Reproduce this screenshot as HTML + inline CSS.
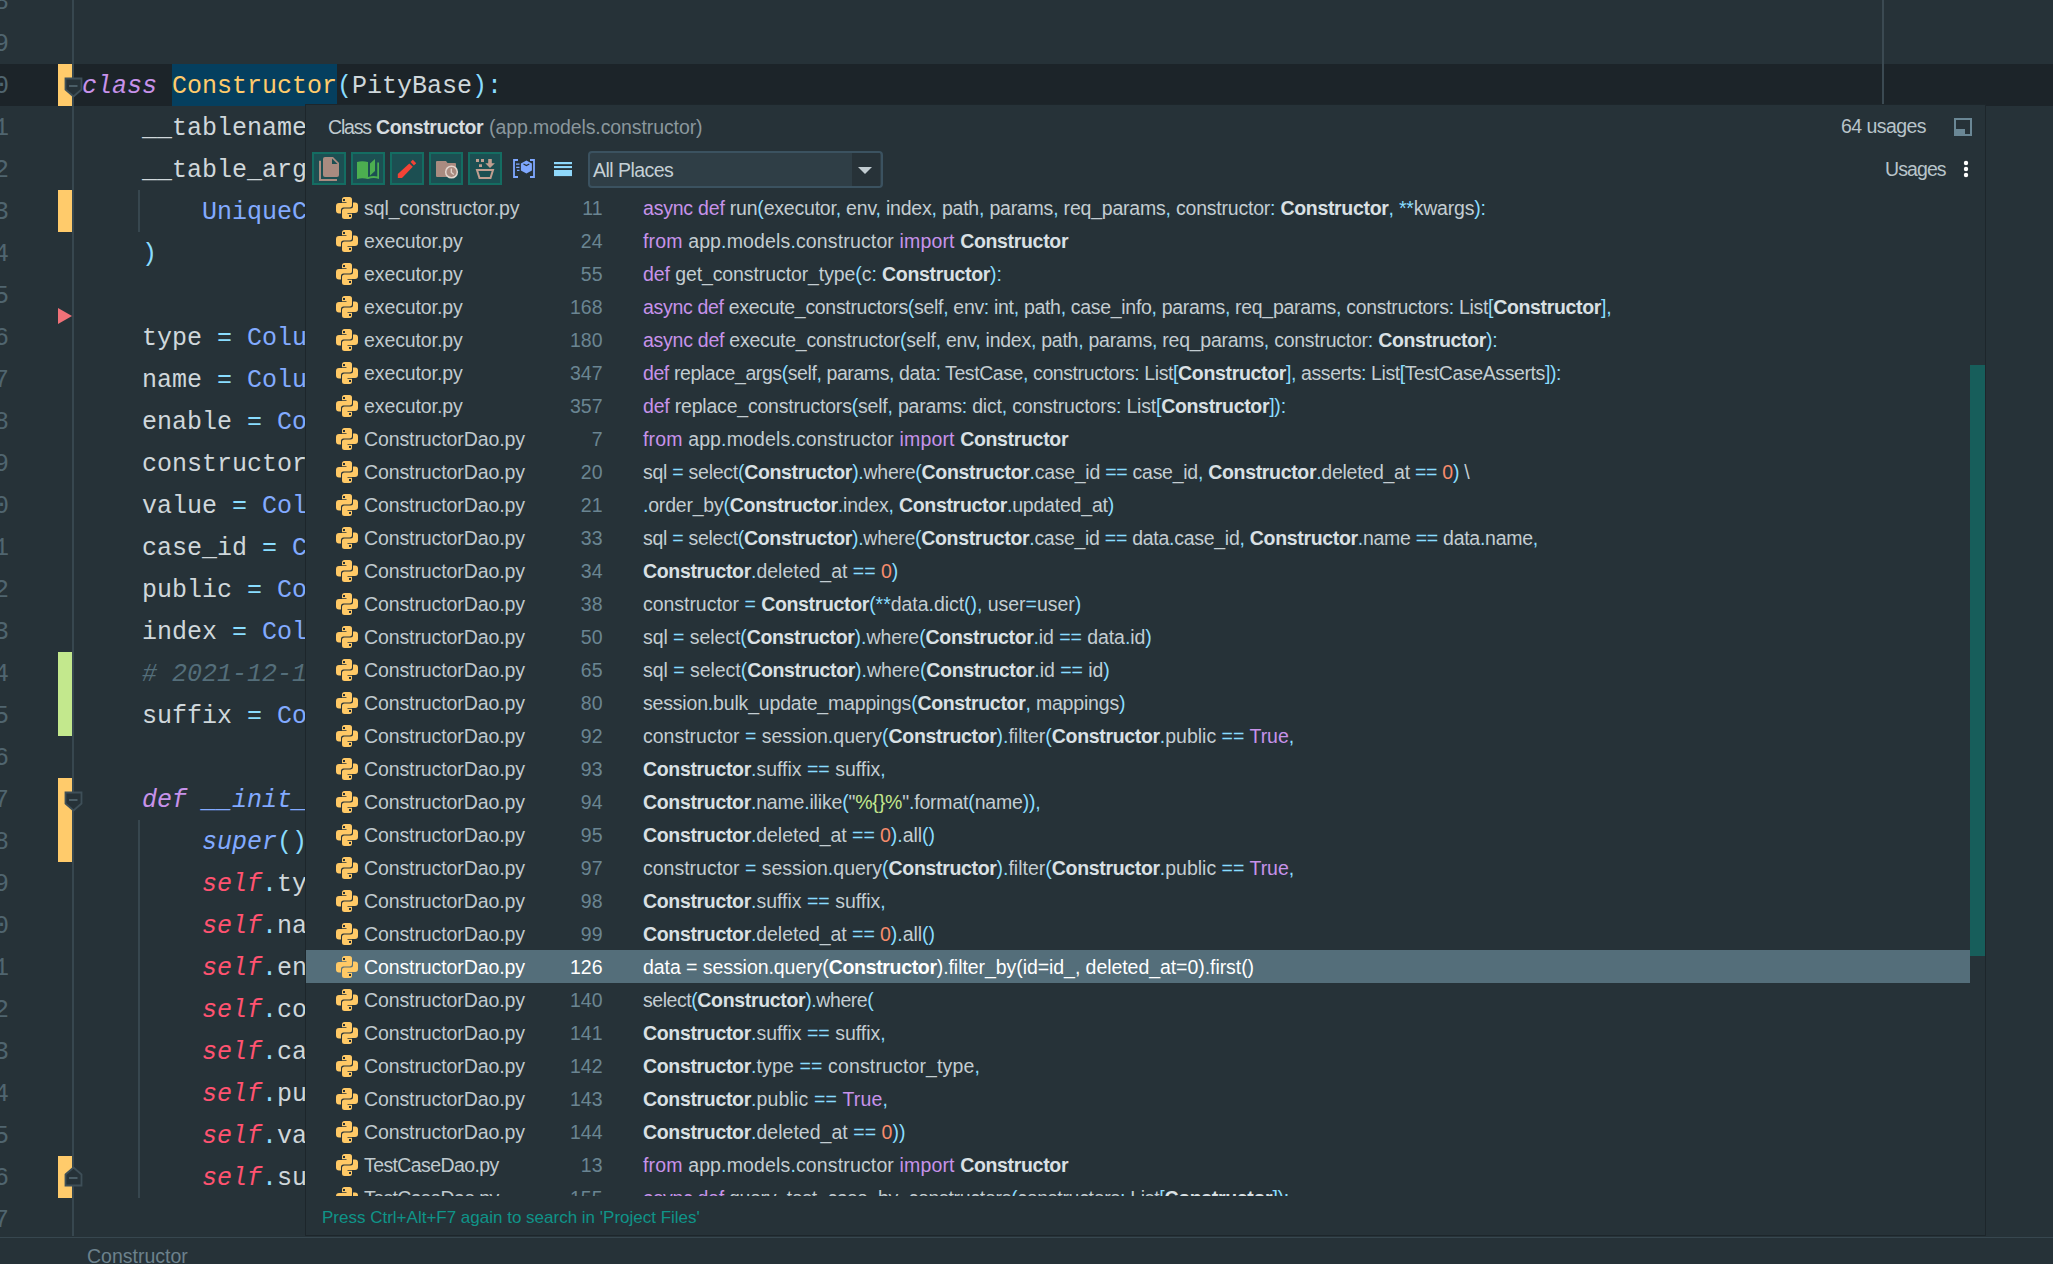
<!DOCTYPE html>
<html><head><meta charset="utf-8">
<style>
*{margin:0;padding:0;box-sizing:border-box}
html,body{width:2053px;height:1264px;overflow:hidden;background:#263238}
body{position:relative;font-family:"Liberation Sans",sans-serif}
.abs{position:absolute}
/* editor */
#ed{position:absolute;left:0;top:0;width:2053px;height:1237px;overflow:hidden}
.ln{position:absolute;left:-40px;width:49px;text-align:right;font:25px/42px "Liberation Mono",monospace;color:#50656f;padding-top:2px}
.cl{position:absolute;left:82px;height:42px;white-space:pre;font:25px/42px "Liberation Mono",monospace;color:#cfd7db;padding-top:2px}
.cur{position:absolute;left:0;top:64px;width:2053px;height:42px;background:#1c2429}
.mk{position:absolute;left:58px;width:14px}
.y{background:#ffcb6b}.g{background:#c3e88d}
.gut{position:absolute;left:72px;top:0;width:2px;height:1236px;background:#37474f}
.guide{position:absolute;width:1px;background:#37474f}
.kw{color:#c792ea;font-style:italic}
.p{color:#89ddff}
.fn{color:#82aaff}
.fni{color:#82aaff;font-style:italic}
.cls{color:#ffcb6b}
.slf{color:#ff5370;font-style:italic}
.cm{color:#546e7a;font-style:italic}
/* popup */
#pop{position:absolute;left:305px;top:104px;width:1681px;height:1132px;background:#263238;border:1px solid #1d262b}
.t19{font-size:19.5px;white-space:pre}
.row{position:absolute;left:0;width:1664px;height:33px;line-height:33px;white-space:pre;font-size:19.5px}
.row .f{position:absolute;left:58px;top:1px;color:#c0cacf;letter-spacing:0px}
.row .n{position:absolute;left:248.5px;top:1px;width:48px;text-align:right;color:#6a8592}
.row .c{position:absolute;left:337px;top:1px;color:#c3cdd2}
.row .ic{position:absolute;left:30px;top:6px;width:22px;height:22px}
.row.sel{background:#546e7a}
.row.sel .f,.row.sel .n,.row.sel .c,.row.sel .c *{color:#fff}
.k{color:#c792ea}
.o{color:#89ddff}
.b{font-weight:bold;color:#d9e0e4;letter-spacing:-0.33px}
.num{color:#f78c6c}
.str{color:#c3e88d}
.btn{position:absolute;top:46px;width:34px;height:33px;background:#1c4f52;border:2px solid #146d62}
</style></head><body>
<div id="ed">
  <div class="cur"></div>
  <div class="abs" style="left:172px;top:64px;width:165px;height:42px;background:#053f5f"></div>
  <div class="gut"></div>
  <!-- line numbers -->
  <div class="ln" style="top:-20px">38</div>
  <div class="ln" style="top:22px">39</div>
  <div class="ln" style="top:64px">40</div>
  <div class="ln" style="top:106px">41</div>
  <div class="ln" style="top:148px">42</div>
  <div class="ln" style="top:190px">43</div>
  <div class="ln" style="top:232px">44</div>
  <div class="ln" style="top:274px">45</div>
  <div class="ln" style="top:316px">46</div>
  <div class="ln" style="top:358px">47</div>
  <div class="ln" style="top:400px">48</div>
  <div class="ln" style="top:442px">49</div>
  <div class="ln" style="top:484px">50</div>
  <div class="ln" style="top:526px">51</div>
  <div class="ln" style="top:568px">52</div>
  <div class="ln" style="top:610px">53</div>
  <div class="ln" style="top:652px">54</div>
  <div class="ln" style="top:694px">55</div>
  <div class="ln" style="top:736px">56</div>
  <div class="ln" style="top:778px">57</div>
  <div class="ln" style="top:820px">58</div>
  <div class="ln" style="top:862px">59</div>
  <div class="ln" style="top:904px">60</div>
  <div class="ln" style="top:946px">61</div>
  <div class="ln" style="top:988px">62</div>
  <div class="ln" style="top:1030px">63</div>
  <div class="ln" style="top:1072px">64</div>
  <div class="ln" style="top:1114px">65</div>
  <div class="ln" style="top:1156px">66</div>
  <div class="ln" style="top:1198px">67</div>
  <!-- markers -->
  <div class="mk y" style="top:64px;height:42px"></div>
  <div class="mk y" style="top:190px;height:42px"></div>
  <div class="mk g" style="top:652px;height:84px"></div>
  <div class="mk y" style="top:778px;height:84px"></div>
  <div class="mk y" style="top:1156px;height:42px"></div>
  <svg class="abs" style="left:57px;top:307px" width="16" height="18"><path d="M1 1 L15 9 L1 17 Z" fill="#f07178"/></svg>
  <!-- fold icons -->
  <svg class="abs" style="left:64px;top:77px" width="19" height="21"><path d="M1.5 1.5 H17.5 V12.5 L9.5 19.5 L1.5 12.5 Z" fill="#263238" stroke="#3e4f58" stroke-width="1.8"/><path d="M5 9 H13.5" stroke="#4f636c" stroke-width="1.8"/></svg>
  <svg class="abs" style="left:64px;top:791px" width="19" height="21"><path d="M1.5 1.5 H17.5 V12.5 L9.5 19.5 L1.5 12.5 Z" fill="#263238" stroke="#3e4f58" stroke-width="1.8"/><path d="M5 9 H13.5" stroke="#4f636c" stroke-width="1.8"/></svg>
  <svg class="abs" style="left:64px;top:1166px" width="19" height="21"><path d="M1.5 19.5 H17.5 V8.5 L9.5 1.5 L1.5 8.5 Z" fill="#263238" stroke="#3e4f58" stroke-width="1.8"/><path d="M5 12 H13.5" stroke="#4f636c" stroke-width="1.8"/></svg>
  <!-- indent guides -->
  <div class="guide" style="left:138px;top:190px;height:42px;width:2px"></div>
  <div class="guide" style="left:138px;top:820px;height:378px;width:2px"></div>
  <!-- right margin -->
  <div class="guide" style="left:1882px;top:0;height:1236px;width:2px;background:#3b4a52"></div>
  <!-- code -->
  <div class="cl" style="top:64px"><span class="kw">class</span> <span class="cls">Constructor</span><span class="p">(</span>PityBase<span class="p">):</span></div>
  <div class="cl" style="top:106px">    __tablename__ <span class="p">=</span> "pity_constructor"</div>
  <div class="cl" style="top:148px">    __table_args__ <span class="p">=</span> <span class="p">(</span></div>
  <div class="cl" style="top:190px">        <span class="fn">UniqueConstraint</span><span class="p">(</span></div>
  <div class="cl" style="top:232px">    <span class="p">)</span></div>
  <div class="cl" style="top:316px">    type <span class="p">=</span> <span class="fn">Column</span><span class="p">(</span>INT</div>
  <div class="cl" style="top:358px">    name <span class="p">=</span> <span class="fn">Column</span><span class="p">(</span>String</div>
  <div class="cl" style="top:400px">    enable <span class="p">=</span> <span class="fn">Column</span><span class="p">(</span>Boolean</div>
  <div class="cl" style="top:442px">    constructor_json <span class="p">=</span> <span class="fn">Column</span></div>
  <div class="cl" style="top:484px">    value <span class="p">=</span> <span class="fn">Column</span><span class="p">(</span>String</div>
  <div class="cl" style="top:526px">    case_id <span class="p">=</span> <span class="fn">Column</span><span class="p">(</span>INT</div>
  <div class="cl" style="top:568px">    public <span class="p">=</span> <span class="fn">Column</span><span class="p">(</span>Boolean</div>
  <div class="cl" style="top:610px">    index <span class="p">=</span> <span class="fn">Column</span><span class="p">(</span>INT</div>
  <div class="cl" style="top:652px">    <span class="cm"># 2021-12-18 </span></div>
  <div class="cl" style="top:694px">    suffix <span class="p">=</span> <span class="fn">Column</span><span class="p">(</span>Boolean</div>
  <div class="cl" style="top:778px">    <span class="kw">def</span> <span class="fni">__init__</span><span class="p">(</span></div>
  <div class="cl" style="top:820px">        <span class="fni">super</span><span class="p">()</span>.__init__</div>
  <div class="cl" style="top:862px">        <span class="slf">self</span><span class="p">.</span>type</div>
  <div class="cl" style="top:904px">        <span class="slf">self</span><span class="p">.</span>name</div>
  <div class="cl" style="top:946px">        <span class="slf">self</span><span class="p">.</span>enable</div>
  <div class="cl" style="top:988px">        <span class="slf">self</span><span class="p">.</span>constructor</div>
  <div class="cl" style="top:1030px">        <span class="slf">self</span><span class="p">.</span>case_id</div>
  <div class="cl" style="top:1072px">        <span class="slf">self</span><span class="p">.</span>public</div>
  <div class="cl" style="top:1114px">        <span class="slf">self</span><span class="p">.</span>value</div>
  <div class="cl" style="top:1156px">        <span class="slf">self</span><span class="p">.</span>suffix</div>
</div>
<!-- status -->
<div class="abs" style="left:0;top:1237px;width:2053px;height:1px;background:#37474f"></div>
<div class="abs t19" style="left:87px;top:1242px;color:#6c818c;font-size:19.5px;line-height:28px">Constructor</div>

<div id="pop"><div class="abs" style="left:0;top:1px">
<div class="abs t19" style="left:22px;top:9px;line-height:24px;color:#c0cbd0;letter-spacing:-1.2px">Class</div><div class="abs t19" style="left:70px;top:9px;line-height:24px;color:#d6dde0;font-weight:bold;letter-spacing:-0.4px">Constructor</div><div class="abs t19" style="left:183px;top:9px;line-height:24px;color:#8a979d;letter-spacing:-0.09px">(app.models.constructor)</div>
<div class="abs t19" style="left:1535px;top:8px;line-height:24px;color:#b8c4ca;letter-spacing:-0.55px">64 usages</div>
<svg class="abs" style="left:1648px;top:12px" width="18" height="18"><rect x="1" y="1" width="16" height="16" fill="none" stroke="#6a8795" stroke-width="2"/><rect x="1" y="11" width="10" height="6" fill="#6a8795"/></svg>
<div class="btn" style="left:6px"></div>
<div class="btn" style="left:45px"></div>
<div class="btn" style="left:84px"></div>
<div class="btn" style="left:123px"></div>
<div class="btn" style="left:162px"></div>
<svg class="abs" style="left:6px;top:46px" width="34" height="34"><path d="M8 8.8V28H25" fill="none" stroke="#a98b80" stroke-width="2"/><path d="M13 5H21L27 11V23Q27 25 25 25H13Q11 25 11 23V7Q11 5 13 5Z" fill="#a98b80"/><path d="M20 6.5V12H25.5Z" fill="#1b4f52"/></svg>
<svg class="abs" style="left:45px;top:46px" width="34" height="34"><path d="M6 10Q11 8.5 17 10V27Q11 25.5 6 27Z" fill="#4caf50"/><path d="M19 11.5L24 7V19L19 23.5Z" fill="#4caf50"/><path d="M26.3 10.5H28V27Q23 25 17 27V25Q22 23.5 26.3 24.5Z" fill="#4caf50"/></svg>
<svg class="abs" style="left:84px;top:46px" width="34" height="34"><path d="M7.8 21.9L19.3 11.4L22.8 14.7L12 26.1H7.8Z" fill="#f44336"/><path d="M20.6 10.1L22.8 7.8L26.2 11.2L23.9 13.5Z" fill="#f44336"/></svg>
<svg class="abs" style="left:123px;top:46px" width="34" height="34"><path d="M8 9H17L18.5 11H26Q27 11 27 12V24Q27 25 26 25H8Q7 25 7 24V10Q7 9 8 9Z" fill="#a98b80"/><circle cx="22.5" cy="20" r="5.8" fill="#a98b80" stroke="#e2d6ce" stroke-width="1.5"/><path d="M22.3 16.5V20.5L24.8 22.5" fill="none" stroke="#e2d6ce" stroke-width="1.3"/></svg>
<svg class="abs" style="left:162px;top:46px" width="34" height="34"><rect x="8" y="7" width="3" height="3" fill="#c09e90"/><rect x="13" y="7" width="3" height="3" fill="#c09e90"/><rect x="11" y="12.3" width="3" height="2.7" fill="#c09e90"/><path d="M20.2 7H23.8V11.2H26.9L22 16L17.3 11.2H20.2Z" fill="#c09e90"/><path d="M9 18H25L22.5 26H11.5Z" fill="none" stroke="#c09e90" stroke-width="2"/></svg>
<svg class="abs" style="left:207px;top:53px" width="23" height="19"><path d="M5 1H1V18H5" fill="none" stroke="#7fa8ff" stroke-width="1.8"/><path d="M17 1H21V18H17" fill="none" stroke="#7fa8ff" stroke-width="1.8"/><path d="M3 5.2H6.5M3.2 8.3H6.5M4 11.3H6.5" stroke="#7fa8ff" stroke-width="1.3"/><path d="M13.4 1.6L18.9 4.6V11.4L13.4 14.4L7.9 11.4V4.6Z" fill="#7fa8ff"/><path d="M10.5 5L13.4 6.6L16.3 5" fill="none" stroke="#263238" stroke-width="1.1"/></svg>
<svg class="abs" style="left:248px;top:56px" width="18" height="15"><rect x="0" y="0" width="18" height="2.2" fill="#8fd8fb"/><rect x="0" y="4" width="18" height="2.1" fill="#8fd8fb"/><rect x="0" y="8" width="18" height="6.1" fill="#8fd8fb"/></svg>
<div class="abs" style="left:282px;top:45px;width:295px;height:37px;border:2px solid #3b5260;border-radius:4px;background:#2f3e46"></div>
<div class="abs" style="left:546px;top:47px;width:28px;height:33px;background:#273238"></div>
<svg class="abs" style="left:551px;top:60px" width="16" height="9"><path d="M1 1H15L8 8Z" fill="#c2ccd1"/></svg>
<div class="abs t19" style="left:287px;top:52px;line-height:24px;color:#c5d0d5;letter-spacing:-0.53px">All Places</div>
<div class="abs t19" style="left:1579px;top:51px;line-height:24px;color:#b8c4ca;letter-spacing:-0.9px">Usages</div>
<svg class="abs" style="left:1656px;top:53px" width="8" height="20"><circle cx="4" cy="4" r="2.2" fill="#fff"/><circle cx="4" cy="10" r="2.2" fill="#fff"/><circle cx="4" cy="16" r="2.2" fill="#fff"/></svg>
<div class="abs" style="left:0;top:85px;width:1664px;height:1005px;overflow:hidden">
<div class="row" style="top:0px"><svg class="ic" viewBox="0 0 22 22"><g fill="#ffc966"><path id="sn" d="M8.5 0H13.5A2.5 2.5 0 0 1 16 2.5V8A2.5 2.5 0 0 1 13.5 10.5H7.5A2.5 2.5 0 0 0 5 13V16.5H3A3 3 0 0 1 0 13.5V9A3 3 0 0 1 3 6H10.5V5.2H6V2.5A2.5 2.5 0 0 1 8.5 0Z"/><path d="M8.5 0H13.5A2.5 2.5 0 0 1 16 2.5V8A2.5 2.5 0 0 1 13.5 10.5H7.5A2.5 2.5 0 0 0 5 13V16.5H3A3 3 0 0 1 0 13.5V9A3 3 0 0 1 3 6H10.5V5.2H6V2.5A2.5 2.5 0 0 1 8.5 0Z" transform="rotate(180 11 11)"/></g><rect x="7" y="2" width="2" height="2" fill="#263238"/><rect x="13" y="18" width="2" height="2" fill="#263238"/></svg><span class="f" style="letter-spacing:-0.1px">sql_constructor.py</span><span class="n">11</span><span class="c" style="letter-spacing:-0.212px"><span class="k">async</span> <span class="k">def</span> run<span class="o">(</span>executor<span class="o">,</span> env<span class="o">,</span> index<span class="o">,</span> path<span class="o">,</span> params<span class="o">,</span> req_params<span class="o">,</span> constructor<span class="o">:</span> <span class="b">Constructor</span><span class="o">,</span> <span class="o">**</span>kwargs<span class="o">):</span></span></div>
<div class="row" style="top:33px"><svg class="ic" viewBox="0 0 22 22"><g fill="#ffc966"><path id="sn" d="M8.5 0H13.5A2.5 2.5 0 0 1 16 2.5V8A2.5 2.5 0 0 1 13.5 10.5H7.5A2.5 2.5 0 0 0 5 13V16.5H3A3 3 0 0 1 0 13.5V9A3 3 0 0 1 3 6H10.5V5.2H6V2.5A2.5 2.5 0 0 1 8.5 0Z"/><path d="M8.5 0H13.5A2.5 2.5 0 0 1 16 2.5V8A2.5 2.5 0 0 1 13.5 10.5H7.5A2.5 2.5 0 0 0 5 13V16.5H3A3 3 0 0 1 0 13.5V9A3 3 0 0 1 3 6H10.5V5.2H6V2.5A2.5 2.5 0 0 1 8.5 0Z" transform="rotate(180 11 11)"/></g><rect x="7" y="2" width="2" height="2" fill="#263238"/><rect x="13" y="18" width="2" height="2" fill="#263238"/></svg><span class="f" style="letter-spacing:-0.1px">executor.py</span><span class="n">24</span><span class="c" style="letter-spacing:0.144px"><span class="k">from</span> app<span class="o">.</span>models<span class="o">.</span>constructor <span class="k">import</span> <span class="b">Constructor</span></span></div>
<div class="row" style="top:66px"><svg class="ic" viewBox="0 0 22 22"><g fill="#ffc966"><path id="sn" d="M8.5 0H13.5A2.5 2.5 0 0 1 16 2.5V8A2.5 2.5 0 0 1 13.5 10.5H7.5A2.5 2.5 0 0 0 5 13V16.5H3A3 3 0 0 1 0 13.5V9A3 3 0 0 1 3 6H10.5V5.2H6V2.5A2.5 2.5 0 0 1 8.5 0Z"/><path d="M8.5 0H13.5A2.5 2.5 0 0 1 16 2.5V8A2.5 2.5 0 0 1 13.5 10.5H7.5A2.5 2.5 0 0 0 5 13V16.5H3A3 3 0 0 1 0 13.5V9A3 3 0 0 1 3 6H10.5V5.2H6V2.5A2.5 2.5 0 0 1 8.5 0Z" transform="rotate(180 11 11)"/></g><rect x="7" y="2" width="2" height="2" fill="#263238"/><rect x="13" y="18" width="2" height="2" fill="#263238"/></svg><span class="f" style="letter-spacing:-0.1px">executor.py</span><span class="n">55</span><span class="c" style="letter-spacing:-0.097px"><span class="k">def</span> get_constructor_type<span class="o">(</span>c<span class="o">:</span> <span class="b">Constructor</span><span class="o">):</span></span></div>
<div class="row" style="top:99px"><svg class="ic" viewBox="0 0 22 22"><g fill="#ffc966"><path id="sn" d="M8.5 0H13.5A2.5 2.5 0 0 1 16 2.5V8A2.5 2.5 0 0 1 13.5 10.5H7.5A2.5 2.5 0 0 0 5 13V16.5H3A3 3 0 0 1 0 13.5V9A3 3 0 0 1 3 6H10.5V5.2H6V2.5A2.5 2.5 0 0 1 8.5 0Z"/><path d="M8.5 0H13.5A2.5 2.5 0 0 1 16 2.5V8A2.5 2.5 0 0 1 13.5 10.5H7.5A2.5 2.5 0 0 0 5 13V16.5H3A3 3 0 0 1 0 13.5V9A3 3 0 0 1 3 6H10.5V5.2H6V2.5A2.5 2.5 0 0 1 8.5 0Z" transform="rotate(180 11 11)"/></g><rect x="7" y="2" width="2" height="2" fill="#263238"/><rect x="13" y="18" width="2" height="2" fill="#263238"/></svg><span class="f" style="letter-spacing:-0.1px">executor.py</span><span class="n">168</span><span class="c" style="letter-spacing:-0.313px"><span class="k">async</span> <span class="k">def</span> execute_constructors<span class="o">(</span>self<span class="o">,</span> env<span class="o">:</span> int<span class="o">,</span> path<span class="o">,</span> case_info<span class="o">,</span> params<span class="o">,</span> req_params<span class="o">,</span> constructors<span class="o">:</span> List<span class="o">[</span><span class="b">Constructor</span><span class="o">],</span></span></div>
<div class="row" style="top:132px"><svg class="ic" viewBox="0 0 22 22"><g fill="#ffc966"><path id="sn" d="M8.5 0H13.5A2.5 2.5 0 0 1 16 2.5V8A2.5 2.5 0 0 1 13.5 10.5H7.5A2.5 2.5 0 0 0 5 13V16.5H3A3 3 0 0 1 0 13.5V9A3 3 0 0 1 3 6H10.5V5.2H6V2.5A2.5 2.5 0 0 1 8.5 0Z"/><path d="M8.5 0H13.5A2.5 2.5 0 0 1 16 2.5V8A2.5 2.5 0 0 1 13.5 10.5H7.5A2.5 2.5 0 0 0 5 13V16.5H3A3 3 0 0 1 0 13.5V9A3 3 0 0 1 3 6H10.5V5.2H6V2.5A2.5 2.5 0 0 1 8.5 0Z" transform="rotate(180 11 11)"/></g><rect x="7" y="2" width="2" height="2" fill="#263238"/><rect x="13" y="18" width="2" height="2" fill="#263238"/></svg><span class="f" style="letter-spacing:-0.1px">executor.py</span><span class="n">180</span><span class="c" style="letter-spacing:-0.256px"><span class="k">async</span> <span class="k">def</span> execute_constructor<span class="o">(</span>self<span class="o">,</span> env<span class="o">,</span> index<span class="o">,</span> path<span class="o">,</span> params<span class="o">,</span> req_params<span class="o">,</span> constructor<span class="o">:</span> <span class="b">Constructor</span><span class="o">):</span></span></div>
<div class="row" style="top:165px"><svg class="ic" viewBox="0 0 22 22"><g fill="#ffc966"><path id="sn" d="M8.5 0H13.5A2.5 2.5 0 0 1 16 2.5V8A2.5 2.5 0 0 1 13.5 10.5H7.5A2.5 2.5 0 0 0 5 13V16.5H3A3 3 0 0 1 0 13.5V9A3 3 0 0 1 3 6H10.5V5.2H6V2.5A2.5 2.5 0 0 1 8.5 0Z"/><path d="M8.5 0H13.5A2.5 2.5 0 0 1 16 2.5V8A2.5 2.5 0 0 1 13.5 10.5H7.5A2.5 2.5 0 0 0 5 13V16.5H3A3 3 0 0 1 0 13.5V9A3 3 0 0 1 3 6H10.5V5.2H6V2.5A2.5 2.5 0 0 1 8.5 0Z" transform="rotate(180 11 11)"/></g><rect x="7" y="2" width="2" height="2" fill="#263238"/><rect x="13" y="18" width="2" height="2" fill="#263238"/></svg><span class="f" style="letter-spacing:-0.1px">executor.py</span><span class="n">347</span><span class="c" style="letter-spacing:-0.412px"><span class="k">def</span> replace_args<span class="o">(</span>self<span class="o">,</span> params<span class="o">,</span> data<span class="o">:</span> TestCase<span class="o">,</span> constructors<span class="o">:</span> List<span class="o">[</span><span class="b">Constructor</span><span class="o">],</span> asserts<span class="o">:</span> List<span class="o">[</span>TestCaseAsserts<span class="o">]):</span></span></div>
<div class="row" style="top:198px"><svg class="ic" viewBox="0 0 22 22"><g fill="#ffc966"><path id="sn" d="M8.5 0H13.5A2.5 2.5 0 0 1 16 2.5V8A2.5 2.5 0 0 1 13.5 10.5H7.5A2.5 2.5 0 0 0 5 13V16.5H3A3 3 0 0 1 0 13.5V9A3 3 0 0 1 3 6H10.5V5.2H6V2.5A2.5 2.5 0 0 1 8.5 0Z"/><path d="M8.5 0H13.5A2.5 2.5 0 0 1 16 2.5V8A2.5 2.5 0 0 1 13.5 10.5H7.5A2.5 2.5 0 0 0 5 13V16.5H3A3 3 0 0 1 0 13.5V9A3 3 0 0 1 3 6H10.5V5.2H6V2.5A2.5 2.5 0 0 1 8.5 0Z" transform="rotate(180 11 11)"/></g><rect x="7" y="2" width="2" height="2" fill="#263238"/><rect x="13" y="18" width="2" height="2" fill="#263238"/></svg><span class="f" style="letter-spacing:-0.1px">executor.py</span><span class="n">357</span><span class="c" style="letter-spacing:-0.202px"><span class="k">def</span> replace_constructors<span class="o">(</span>self<span class="o">,</span> params<span class="o">:</span> dict<span class="o">,</span> constructors<span class="o">:</span> List<span class="o">[</span><span class="b">Constructor</span><span class="o">]):</span></span></div>
<div class="row" style="top:231px"><svg class="ic" viewBox="0 0 22 22"><g fill="#ffc966"><path id="sn" d="M8.5 0H13.5A2.5 2.5 0 0 1 16 2.5V8A2.5 2.5 0 0 1 13.5 10.5H7.5A2.5 2.5 0 0 0 5 13V16.5H3A3 3 0 0 1 0 13.5V9A3 3 0 0 1 3 6H10.5V5.2H6V2.5A2.5 2.5 0 0 1 8.5 0Z"/><path d="M8.5 0H13.5A2.5 2.5 0 0 1 16 2.5V8A2.5 2.5 0 0 1 13.5 10.5H7.5A2.5 2.5 0 0 0 5 13V16.5H3A3 3 0 0 1 0 13.5V9A3 3 0 0 1 3 6H10.5V5.2H6V2.5A2.5 2.5 0 0 1 8.5 0Z" transform="rotate(180 11 11)"/></g><rect x="7" y="2" width="2" height="2" fill="#263238"/><rect x="13" y="18" width="2" height="2" fill="#263238"/></svg><span class="f" style="letter-spacing:-0.1px">ConstructorDao.py</span><span class="n">7</span><span class="c" style="letter-spacing:0.144px"><span class="k">from</span> app<span class="o">.</span>models<span class="o">.</span>constructor <span class="k">import</span> <span class="b">Constructor</span></span></div>
<div class="row" style="top:264px"><svg class="ic" viewBox="0 0 22 22"><g fill="#ffc966"><path id="sn" d="M8.5 0H13.5A2.5 2.5 0 0 1 16 2.5V8A2.5 2.5 0 0 1 13.5 10.5H7.5A2.5 2.5 0 0 0 5 13V16.5H3A3 3 0 0 1 0 13.5V9A3 3 0 0 1 3 6H10.5V5.2H6V2.5A2.5 2.5 0 0 1 8.5 0Z"/><path d="M8.5 0H13.5A2.5 2.5 0 0 1 16 2.5V8A2.5 2.5 0 0 1 13.5 10.5H7.5A2.5 2.5 0 0 0 5 13V16.5H3A3 3 0 0 1 0 13.5V9A3 3 0 0 1 3 6H10.5V5.2H6V2.5A2.5 2.5 0 0 1 8.5 0Z" transform="rotate(180 11 11)"/></g><rect x="7" y="2" width="2" height="2" fill="#263238"/><rect x="13" y="18" width="2" height="2" fill="#263238"/></svg><span class="f" style="letter-spacing:-0.1px">ConstructorDao.py</span><span class="n">20</span><span class="c" style="letter-spacing:-0.265px">sql <span class="o">=</span> select<span class="o">(</span><span class="b">Constructor</span><span class="o">).</span>where<span class="o">(</span><span class="b">Constructor</span><span class="o">.</span>case_id <span class="o">==</span> case_id<span class="o">,</span> <span class="b">Constructor</span><span class="o">.</span>deleted_at <span class="o">==</span> <span class="num">0</span><span class="o">)</span> \</span></div>
<div class="row" style="top:297px"><svg class="ic" viewBox="0 0 22 22"><g fill="#ffc966"><path id="sn" d="M8.5 0H13.5A2.5 2.5 0 0 1 16 2.5V8A2.5 2.5 0 0 1 13.5 10.5H7.5A2.5 2.5 0 0 0 5 13V16.5H3A3 3 0 0 1 0 13.5V9A3 3 0 0 1 3 6H10.5V5.2H6V2.5A2.5 2.5 0 0 1 8.5 0Z"/><path d="M8.5 0H13.5A2.5 2.5 0 0 1 16 2.5V8A2.5 2.5 0 0 1 13.5 10.5H7.5A2.5 2.5 0 0 0 5 13V16.5H3A3 3 0 0 1 0 13.5V9A3 3 0 0 1 3 6H10.5V5.2H6V2.5A2.5 2.5 0 0 1 8.5 0Z" transform="rotate(180 11 11)"/></g><rect x="7" y="2" width="2" height="2" fill="#263238"/><rect x="13" y="18" width="2" height="2" fill="#263238"/></svg><span class="f" style="letter-spacing:-0.1px">ConstructorDao.py</span><span class="n">21</span><span class="c" style="letter-spacing:-0.207px"><span class="o">.</span>order_by<span class="o">(</span><span class="b">Constructor</span><span class="o">.</span>index<span class="o">,</span> <span class="b">Constructor</span><span class="o">.</span>updated_at<span class="o">)</span></span></div>
<div class="row" style="top:330px"><svg class="ic" viewBox="0 0 22 22"><g fill="#ffc966"><path id="sn" d="M8.5 0H13.5A2.5 2.5 0 0 1 16 2.5V8A2.5 2.5 0 0 1 13.5 10.5H7.5A2.5 2.5 0 0 0 5 13V16.5H3A3 3 0 0 1 0 13.5V9A3 3 0 0 1 3 6H10.5V5.2H6V2.5A2.5 2.5 0 0 1 8.5 0Z"/><path d="M8.5 0H13.5A2.5 2.5 0 0 1 16 2.5V8A2.5 2.5 0 0 1 13.5 10.5H7.5A2.5 2.5 0 0 0 5 13V16.5H3A3 3 0 0 1 0 13.5V9A3 3 0 0 1 3 6H10.5V5.2H6V2.5A2.5 2.5 0 0 1 8.5 0Z" transform="rotate(180 11 11)"/></g><rect x="7" y="2" width="2" height="2" fill="#263238"/><rect x="13" y="18" width="2" height="2" fill="#263238"/></svg><span class="f" style="letter-spacing:-0.1px">ConstructorDao.py</span><span class="n">33</span><span class="c" style="letter-spacing:-0.277px">sql <span class="o">=</span> select<span class="o">(</span><span class="b">Constructor</span><span class="o">).</span>where<span class="o">(</span><span class="b">Constructor</span><span class="o">.</span>case_id <span class="o">==</span> data<span class="o">.</span>case_id<span class="o">,</span> <span class="b">Constructor</span><span class="o">.</span>name <span class="o">==</span> data<span class="o">.</span>name<span class="o">,</span></span></div>
<div class="row" style="top:363px"><svg class="ic" viewBox="0 0 22 22"><g fill="#ffc966"><path id="sn" d="M8.5 0H13.5A2.5 2.5 0 0 1 16 2.5V8A2.5 2.5 0 0 1 13.5 10.5H7.5A2.5 2.5 0 0 0 5 13V16.5H3A3 3 0 0 1 0 13.5V9A3 3 0 0 1 3 6H10.5V5.2H6V2.5A2.5 2.5 0 0 1 8.5 0Z"/><path d="M8.5 0H13.5A2.5 2.5 0 0 1 16 2.5V8A2.5 2.5 0 0 1 13.5 10.5H7.5A2.5 2.5 0 0 0 5 13V16.5H3A3 3 0 0 1 0 13.5V9A3 3 0 0 1 3 6H10.5V5.2H6V2.5A2.5 2.5 0 0 1 8.5 0Z" transform="rotate(180 11 11)"/></g><rect x="7" y="2" width="2" height="2" fill="#263238"/><rect x="13" y="18" width="2" height="2" fill="#263238"/></svg><span class="f" style="letter-spacing:-0.1px">ConstructorDao.py</span><span class="n">34</span><span class="c" style="letter-spacing:-0.006px"><span class="b">Constructor</span><span class="o">.</span>deleted_at <span class="o">==</span> <span class="num">0</span><span class="o">)</span></span></div>
<div class="row" style="top:396px"><svg class="ic" viewBox="0 0 22 22"><g fill="#ffc966"><path id="sn" d="M8.5 0H13.5A2.5 2.5 0 0 1 16 2.5V8A2.5 2.5 0 0 1 13.5 10.5H7.5A2.5 2.5 0 0 0 5 13V16.5H3A3 3 0 0 1 0 13.5V9A3 3 0 0 1 3 6H10.5V5.2H6V2.5A2.5 2.5 0 0 1 8.5 0Z"/><path d="M8.5 0H13.5A2.5 2.5 0 0 1 16 2.5V8A2.5 2.5 0 0 1 13.5 10.5H7.5A2.5 2.5 0 0 0 5 13V16.5H3A3 3 0 0 1 0 13.5V9A3 3 0 0 1 3 6H10.5V5.2H6V2.5A2.5 2.5 0 0 1 8.5 0Z" transform="rotate(180 11 11)"/></g><rect x="7" y="2" width="2" height="2" fill="#263238"/><rect x="13" y="18" width="2" height="2" fill="#263238"/></svg><span class="f" style="letter-spacing:-0.1px">ConstructorDao.py</span><span class="n">38</span><span class="c" style="letter-spacing:-0.038px">constructor <span class="o">=</span> <span class="b">Constructor</span><span class="o">(**</span>data<span class="o">.</span>dict<span class="o">(),</span> user<span class="o">=</span>user<span class="o">)</span></span></div>
<div class="row" style="top:429px"><svg class="ic" viewBox="0 0 22 22"><g fill="#ffc966"><path id="sn" d="M8.5 0H13.5A2.5 2.5 0 0 1 16 2.5V8A2.5 2.5 0 0 1 13.5 10.5H7.5A2.5 2.5 0 0 0 5 13V16.5H3A3 3 0 0 1 0 13.5V9A3 3 0 0 1 3 6H10.5V5.2H6V2.5A2.5 2.5 0 0 1 8.5 0Z"/><path d="M8.5 0H13.5A2.5 2.5 0 0 1 16 2.5V8A2.5 2.5 0 0 1 13.5 10.5H7.5A2.5 2.5 0 0 0 5 13V16.5H3A3 3 0 0 1 0 13.5V9A3 3 0 0 1 3 6H10.5V5.2H6V2.5A2.5 2.5 0 0 1 8.5 0Z" transform="rotate(180 11 11)"/></g><rect x="7" y="2" width="2" height="2" fill="#263238"/><rect x="13" y="18" width="2" height="2" fill="#263238"/></svg><span class="f" style="letter-spacing:-0.1px">ConstructorDao.py</span><span class="n">50</span><span class="c" style="letter-spacing:-0.074px">sql <span class="o">=</span> select<span class="o">(</span><span class="b">Constructor</span><span class="o">).</span>where<span class="o">(</span><span class="b">Constructor</span><span class="o">.</span>id <span class="o">==</span> data<span class="o">.</span>id<span class="o">)</span></span></div>
<div class="row" style="top:462px"><svg class="ic" viewBox="0 0 22 22"><g fill="#ffc966"><path id="sn" d="M8.5 0H13.5A2.5 2.5 0 0 1 16 2.5V8A2.5 2.5 0 0 1 13.5 10.5H7.5A2.5 2.5 0 0 0 5 13V16.5H3A3 3 0 0 1 0 13.5V9A3 3 0 0 1 3 6H10.5V5.2H6V2.5A2.5 2.5 0 0 1 8.5 0Z"/><path d="M8.5 0H13.5A2.5 2.5 0 0 1 16 2.5V8A2.5 2.5 0 0 1 13.5 10.5H7.5A2.5 2.5 0 0 0 5 13V16.5H3A3 3 0 0 1 0 13.5V9A3 3 0 0 1 3 6H10.5V5.2H6V2.5A2.5 2.5 0 0 1 8.5 0Z" transform="rotate(180 11 11)"/></g><rect x="7" y="2" width="2" height="2" fill="#263238"/><rect x="13" y="18" width="2" height="2" fill="#263238"/></svg><span class="f" style="letter-spacing:-0.1px">ConstructorDao.py</span><span class="n">65</span><span class="c" style="letter-spacing:-0.037px">sql <span class="o">=</span> select<span class="o">(</span><span class="b">Constructor</span><span class="o">).</span>where<span class="o">(</span><span class="b">Constructor</span><span class="o">.</span>id <span class="o">==</span> id<span class="o">)</span></span></div>
<div class="row" style="top:495px"><svg class="ic" viewBox="0 0 22 22"><g fill="#ffc966"><path id="sn" d="M8.5 0H13.5A2.5 2.5 0 0 1 16 2.5V8A2.5 2.5 0 0 1 13.5 10.5H7.5A2.5 2.5 0 0 0 5 13V16.5H3A3 3 0 0 1 0 13.5V9A3 3 0 0 1 3 6H10.5V5.2H6V2.5A2.5 2.5 0 0 1 8.5 0Z"/><path d="M8.5 0H13.5A2.5 2.5 0 0 1 16 2.5V8A2.5 2.5 0 0 1 13.5 10.5H7.5A2.5 2.5 0 0 0 5 13V16.5H3A3 3 0 0 1 0 13.5V9A3 3 0 0 1 3 6H10.5V5.2H6V2.5A2.5 2.5 0 0 1 8.5 0Z" transform="rotate(180 11 11)"/></g><rect x="7" y="2" width="2" height="2" fill="#263238"/><rect x="13" y="18" width="2" height="2" fill="#263238"/></svg><span class="f" style="letter-spacing:-0.1px">ConstructorDao.py</span><span class="n">80</span><span class="c" style="letter-spacing:-0.182px">session<span class="o">.</span>bulk_update_mappings<span class="o">(</span><span class="b">Constructor</span><span class="o">,</span> mappings<span class="o">)</span></span></div>
<div class="row" style="top:528px"><svg class="ic" viewBox="0 0 22 22"><g fill="#ffc966"><path id="sn" d="M8.5 0H13.5A2.5 2.5 0 0 1 16 2.5V8A2.5 2.5 0 0 1 13.5 10.5H7.5A2.5 2.5 0 0 0 5 13V16.5H3A3 3 0 0 1 0 13.5V9A3 3 0 0 1 3 6H10.5V5.2H6V2.5A2.5 2.5 0 0 1 8.5 0Z"/><path d="M8.5 0H13.5A2.5 2.5 0 0 1 16 2.5V8A2.5 2.5 0 0 1 13.5 10.5H7.5A2.5 2.5 0 0 0 5 13V16.5H3A3 3 0 0 1 0 13.5V9A3 3 0 0 1 3 6H10.5V5.2H6V2.5A2.5 2.5 0 0 1 8.5 0Z" transform="rotate(180 11 11)"/></g><rect x="7" y="2" width="2" height="2" fill="#263238"/><rect x="13" y="18" width="2" height="2" fill="#263238"/></svg><span class="f" style="letter-spacing:-0.1px">ConstructorDao.py</span><span class="n">92</span><span class="c" style="letter-spacing:0.002px">constructor <span class="o">=</span> session<span class="o">.</span>query<span class="o">(</span><span class="b">Constructor</span><span class="o">).</span>filter<span class="o">(</span><span class="b">Constructor</span><span class="o">.</span>public <span class="o">==</span> <span class="k">True</span><span class="o">,</span></span></div>
<div class="row" style="top:561px"><svg class="ic" viewBox="0 0 22 22"><g fill="#ffc966"><path id="sn" d="M8.5 0H13.5A2.5 2.5 0 0 1 16 2.5V8A2.5 2.5 0 0 1 13.5 10.5H7.5A2.5 2.5 0 0 0 5 13V16.5H3A3 3 0 0 1 0 13.5V9A3 3 0 0 1 3 6H10.5V5.2H6V2.5A2.5 2.5 0 0 1 8.5 0Z"/><path d="M8.5 0H13.5A2.5 2.5 0 0 1 16 2.5V8A2.5 2.5 0 0 1 13.5 10.5H7.5A2.5 2.5 0 0 0 5 13V16.5H3A3 3 0 0 1 0 13.5V9A3 3 0 0 1 3 6H10.5V5.2H6V2.5A2.5 2.5 0 0 1 8.5 0Z" transform="rotate(180 11 11)"/></g><rect x="7" y="2" width="2" height="2" fill="#263238"/><rect x="13" y="18" width="2" height="2" fill="#263238"/></svg><span class="f" style="letter-spacing:-0.1px">ConstructorDao.py</span><span class="n">93</span><span class="c" style="letter-spacing:0.000px"><span class="b">Constructor</span><span class="o">.</span>suffix <span class="o">==</span> suffix<span class="o">,</span></span></div>
<div class="row" style="top:594px"><svg class="ic" viewBox="0 0 22 22"><g fill="#ffc966"><path id="sn" d="M8.5 0H13.5A2.5 2.5 0 0 1 16 2.5V8A2.5 2.5 0 0 1 13.5 10.5H7.5A2.5 2.5 0 0 0 5 13V16.5H3A3 3 0 0 1 0 13.5V9A3 3 0 0 1 3 6H10.5V5.2H6V2.5A2.5 2.5 0 0 1 8.5 0Z"/><path d="M8.5 0H13.5A2.5 2.5 0 0 1 16 2.5V8A2.5 2.5 0 0 1 13.5 10.5H7.5A2.5 2.5 0 0 0 5 13V16.5H3A3 3 0 0 1 0 13.5V9A3 3 0 0 1 3 6H10.5V5.2H6V2.5A2.5 2.5 0 0 1 8.5 0Z" transform="rotate(180 11 11)"/></g><rect x="7" y="2" width="2" height="2" fill="#263238"/><rect x="13" y="18" width="2" height="2" fill="#263238"/></svg><span class="f" style="letter-spacing:-0.1px">ConstructorDao.py</span><span class="n">94</span><span class="c" style="letter-spacing:-0.184px"><span class="b">Constructor</span><span class="o">.</span>name<span class="o">.</span>ilike<span class="o">(</span>"<span class="str">%{}%</span>"<span class="o">.</span>format<span class="o">(</span>name<span class="o">)),</span></span></div>
<div class="row" style="top:627px"><svg class="ic" viewBox="0 0 22 22"><g fill="#ffc966"><path id="sn" d="M8.5 0H13.5A2.5 2.5 0 0 1 16 2.5V8A2.5 2.5 0 0 1 13.5 10.5H7.5A2.5 2.5 0 0 0 5 13V16.5H3A3 3 0 0 1 0 13.5V9A3 3 0 0 1 3 6H10.5V5.2H6V2.5A2.5 2.5 0 0 1 8.5 0Z"/><path d="M8.5 0H13.5A2.5 2.5 0 0 1 16 2.5V8A2.5 2.5 0 0 1 13.5 10.5H7.5A2.5 2.5 0 0 0 5 13V16.5H3A3 3 0 0 1 0 13.5V9A3 3 0 0 1 3 6H10.5V5.2H6V2.5A2.5 2.5 0 0 1 8.5 0Z" transform="rotate(180 11 11)"/></g><rect x="7" y="2" width="2" height="2" fill="#263238"/><rect x="13" y="18" width="2" height="2" fill="#263238"/></svg><span class="f" style="letter-spacing:-0.1px">ConstructorDao.py</span><span class="n">95</span><span class="c" style="letter-spacing:-0.068px"><span class="b">Constructor</span><span class="o">.</span>deleted_at <span class="o">==</span> <span class="num">0</span><span class="o">).</span>all<span class="o">()</span></span></div>
<div class="row" style="top:660px"><svg class="ic" viewBox="0 0 22 22"><g fill="#ffc966"><path id="sn" d="M8.5 0H13.5A2.5 2.5 0 0 1 16 2.5V8A2.5 2.5 0 0 1 13.5 10.5H7.5A2.5 2.5 0 0 0 5 13V16.5H3A3 3 0 0 1 0 13.5V9A3 3 0 0 1 3 6H10.5V5.2H6V2.5A2.5 2.5 0 0 1 8.5 0Z"/><path d="M8.5 0H13.5A2.5 2.5 0 0 1 16 2.5V8A2.5 2.5 0 0 1 13.5 10.5H7.5A2.5 2.5 0 0 0 5 13V16.5H3A3 3 0 0 1 0 13.5V9A3 3 0 0 1 3 6H10.5V5.2H6V2.5A2.5 2.5 0 0 1 8.5 0Z" transform="rotate(180 11 11)"/></g><rect x="7" y="2" width="2" height="2" fill="#263238"/><rect x="13" y="18" width="2" height="2" fill="#263238"/></svg><span class="f" style="letter-spacing:-0.1px">ConstructorDao.py</span><span class="n">97</span><span class="c" style="letter-spacing:0.002px">constructor <span class="o">=</span> session<span class="o">.</span>query<span class="o">(</span><span class="b">Constructor</span><span class="o">).</span>filter<span class="o">(</span><span class="b">Constructor</span><span class="o">.</span>public <span class="o">==</span> <span class="k">True</span><span class="o">,</span></span></div>
<div class="row" style="top:693px"><svg class="ic" viewBox="0 0 22 22"><g fill="#ffc966"><path id="sn" d="M8.5 0H13.5A2.5 2.5 0 0 1 16 2.5V8A2.5 2.5 0 0 1 13.5 10.5H7.5A2.5 2.5 0 0 0 5 13V16.5H3A3 3 0 0 1 0 13.5V9A3 3 0 0 1 3 6H10.5V5.2H6V2.5A2.5 2.5 0 0 1 8.5 0Z"/><path d="M8.5 0H13.5A2.5 2.5 0 0 1 16 2.5V8A2.5 2.5 0 0 1 13.5 10.5H7.5A2.5 2.5 0 0 0 5 13V16.5H3A3 3 0 0 1 0 13.5V9A3 3 0 0 1 3 6H10.5V5.2H6V2.5A2.5 2.5 0 0 1 8.5 0Z" transform="rotate(180 11 11)"/></g><rect x="7" y="2" width="2" height="2" fill="#263238"/><rect x="13" y="18" width="2" height="2" fill="#263238"/></svg><span class="f" style="letter-spacing:-0.1px">ConstructorDao.py</span><span class="n">98</span><span class="c" style="letter-spacing:0.000px"><span class="b">Constructor</span><span class="o">.</span>suffix <span class="o">==</span> suffix<span class="o">,</span></span></div>
<div class="row" style="top:726px"><svg class="ic" viewBox="0 0 22 22"><g fill="#ffc966"><path id="sn" d="M8.5 0H13.5A2.5 2.5 0 0 1 16 2.5V8A2.5 2.5 0 0 1 13.5 10.5H7.5A2.5 2.5 0 0 0 5 13V16.5H3A3 3 0 0 1 0 13.5V9A3 3 0 0 1 3 6H10.5V5.2H6V2.5A2.5 2.5 0 0 1 8.5 0Z"/><path d="M8.5 0H13.5A2.5 2.5 0 0 1 16 2.5V8A2.5 2.5 0 0 1 13.5 10.5H7.5A2.5 2.5 0 0 0 5 13V16.5H3A3 3 0 0 1 0 13.5V9A3 3 0 0 1 3 6H10.5V5.2H6V2.5A2.5 2.5 0 0 1 8.5 0Z" transform="rotate(180 11 11)"/></g><rect x="7" y="2" width="2" height="2" fill="#263238"/><rect x="13" y="18" width="2" height="2" fill="#263238"/></svg><span class="f" style="letter-spacing:-0.1px">ConstructorDao.py</span><span class="n">99</span><span class="c" style="letter-spacing:-0.068px"><span class="b">Constructor</span><span class="o">.</span>deleted_at <span class="o">==</span> <span class="num">0</span><span class="o">).</span>all<span class="o">()</span></span></div>
<div class="row sel" style="top:759px"><svg class="ic" viewBox="0 0 22 22"><g fill="#ffc966"><path id="sn" d="M8.5 0H13.5A2.5 2.5 0 0 1 16 2.5V8A2.5 2.5 0 0 1 13.5 10.5H7.5A2.5 2.5 0 0 0 5 13V16.5H3A3 3 0 0 1 0 13.5V9A3 3 0 0 1 3 6H10.5V5.2H6V2.5A2.5 2.5 0 0 1 8.5 0Z"/><path d="M8.5 0H13.5A2.5 2.5 0 0 1 16 2.5V8A2.5 2.5 0 0 1 13.5 10.5H7.5A2.5 2.5 0 0 0 5 13V16.5H3A3 3 0 0 1 0 13.5V9A3 3 0 0 1 3 6H10.5V5.2H6V2.5A2.5 2.5 0 0 1 8.5 0Z" transform="rotate(180 11 11)"/></g><rect x="7" y="2" width="2" height="2" fill="#263238"/><rect x="13" y="18" width="2" height="2" fill="#263238"/></svg><span class="f" style="letter-spacing:-0.1px">ConstructorDao.py</span><span class="n">126</span><span class="c" style="letter-spacing:-0.061px">data <span class="o">=</span> session<span class="o">.</span>query<span class="o">(</span><span class="b">Constructor</span><span class="o">).</span>filter_by<span class="o">(</span>id<span class="o">=</span>id_<span class="o">,</span> deleted_at<span class="o">=</span><span class="num">0</span><span class="o">).</span>first<span class="o">()</span></span></div>
<div class="row" style="top:792px"><svg class="ic" viewBox="0 0 22 22"><g fill="#ffc966"><path id="sn" d="M8.5 0H13.5A2.5 2.5 0 0 1 16 2.5V8A2.5 2.5 0 0 1 13.5 10.5H7.5A2.5 2.5 0 0 0 5 13V16.5H3A3 3 0 0 1 0 13.5V9A3 3 0 0 1 3 6H10.5V5.2H6V2.5A2.5 2.5 0 0 1 8.5 0Z"/><path d="M8.5 0H13.5A2.5 2.5 0 0 1 16 2.5V8A2.5 2.5 0 0 1 13.5 10.5H7.5A2.5 2.5 0 0 0 5 13V16.5H3A3 3 0 0 1 0 13.5V9A3 3 0 0 1 3 6H10.5V5.2H6V2.5A2.5 2.5 0 0 1 8.5 0Z" transform="rotate(180 11 11)"/></g><rect x="7" y="2" width="2" height="2" fill="#263238"/><rect x="13" y="18" width="2" height="2" fill="#263238"/></svg><span class="f" style="letter-spacing:-0.1px">ConstructorDao.py</span><span class="n">140</span><span class="c" style="letter-spacing:-0.443px">select<span class="o">(</span><span class="b">Constructor</span><span class="o">).</span>where<span class="o">(</span></span></div>
<div class="row" style="top:825px"><svg class="ic" viewBox="0 0 22 22"><g fill="#ffc966"><path id="sn" d="M8.5 0H13.5A2.5 2.5 0 0 1 16 2.5V8A2.5 2.5 0 0 1 13.5 10.5H7.5A2.5 2.5 0 0 0 5 13V16.5H3A3 3 0 0 1 0 13.5V9A3 3 0 0 1 3 6H10.5V5.2H6V2.5A2.5 2.5 0 0 1 8.5 0Z"/><path d="M8.5 0H13.5A2.5 2.5 0 0 1 16 2.5V8A2.5 2.5 0 0 1 13.5 10.5H7.5A2.5 2.5 0 0 0 5 13V16.5H3A3 3 0 0 1 0 13.5V9A3 3 0 0 1 3 6H10.5V5.2H6V2.5A2.5 2.5 0 0 1 8.5 0Z" transform="rotate(180 11 11)"/></g><rect x="7" y="2" width="2" height="2" fill="#263238"/><rect x="13" y="18" width="2" height="2" fill="#263238"/></svg><span class="f" style="letter-spacing:-0.1px">ConstructorDao.py</span><span class="n">141</span><span class="c" style="letter-spacing:0.000px"><span class="b">Constructor</span><span class="o">.</span>suffix <span class="o">==</span> suffix<span class="o">,</span></span></div>
<div class="row" style="top:858px"><svg class="ic" viewBox="0 0 22 22"><g fill="#ffc966"><path id="sn" d="M8.5 0H13.5A2.5 2.5 0 0 1 16 2.5V8A2.5 2.5 0 0 1 13.5 10.5H7.5A2.5 2.5 0 0 0 5 13V16.5H3A3 3 0 0 1 0 13.5V9A3 3 0 0 1 3 6H10.5V5.2H6V2.5A2.5 2.5 0 0 1 8.5 0Z"/><path d="M8.5 0H13.5A2.5 2.5 0 0 1 16 2.5V8A2.5 2.5 0 0 1 13.5 10.5H7.5A2.5 2.5 0 0 0 5 13V16.5H3A3 3 0 0 1 0 13.5V9A3 3 0 0 1 3 6H10.5V5.2H6V2.5A2.5 2.5 0 0 1 8.5 0Z" transform="rotate(180 11 11)"/></g><rect x="7" y="2" width="2" height="2" fill="#263238"/><rect x="13" y="18" width="2" height="2" fill="#263238"/></svg><span class="f" style="letter-spacing:-0.1px">ConstructorDao.py</span><span class="n">142</span><span class="c" style="letter-spacing:0.136px"><span class="b">Constructor</span><span class="o">.</span>type <span class="o">==</span> constructor_type<span class="o">,</span></span></div>
<div class="row" style="top:891px"><svg class="ic" viewBox="0 0 22 22"><g fill="#ffc966"><path id="sn" d="M8.5 0H13.5A2.5 2.5 0 0 1 16 2.5V8A2.5 2.5 0 0 1 13.5 10.5H7.5A2.5 2.5 0 0 0 5 13V16.5H3A3 3 0 0 1 0 13.5V9A3 3 0 0 1 3 6H10.5V5.2H6V2.5A2.5 2.5 0 0 1 8.5 0Z"/><path d="M8.5 0H13.5A2.5 2.5 0 0 1 16 2.5V8A2.5 2.5 0 0 1 13.5 10.5H7.5A2.5 2.5 0 0 0 5 13V16.5H3A3 3 0 0 1 0 13.5V9A3 3 0 0 1 3 6H10.5V5.2H6V2.5A2.5 2.5 0 0 1 8.5 0Z" transform="rotate(180 11 11)"/></g><rect x="7" y="2" width="2" height="2" fill="#263238"/><rect x="13" y="18" width="2" height="2" fill="#263238"/></svg><span class="f" style="letter-spacing:-0.1px">ConstructorDao.py</span><span class="n">143</span><span class="c" style="letter-spacing:0.160px"><span class="b">Constructor</span><span class="o">.</span>public <span class="o">==</span> <span class="k">True</span><span class="o">,</span></span></div>
<div class="row" style="top:924px"><svg class="ic" viewBox="0 0 22 22"><g fill="#ffc966"><path id="sn" d="M8.5 0H13.5A2.5 2.5 0 0 1 16 2.5V8A2.5 2.5 0 0 1 13.5 10.5H7.5A2.5 2.5 0 0 0 5 13V16.5H3A3 3 0 0 1 0 13.5V9A3 3 0 0 1 3 6H10.5V5.2H6V2.5A2.5 2.5 0 0 1 8.5 0Z"/><path d="M8.5 0H13.5A2.5 2.5 0 0 1 16 2.5V8A2.5 2.5 0 0 1 13.5 10.5H7.5A2.5 2.5 0 0 0 5 13V16.5H3A3 3 0 0 1 0 13.5V9A3 3 0 0 1 3 6H10.5V5.2H6V2.5A2.5 2.5 0 0 1 8.5 0Z" transform="rotate(180 11 11)"/></g><rect x="7" y="2" width="2" height="2" fill="#263238"/><rect x="13" y="18" width="2" height="2" fill="#263238"/></svg><span class="f" style="letter-spacing:-0.1px">ConstructorDao.py</span><span class="n">144</span><span class="c" style="letter-spacing:0.029px"><span class="b">Constructor</span><span class="o">.</span>deleted_at <span class="o">==</span> <span class="num">0</span><span class="o">))</span></span></div>
<div class="row" style="top:957px"><svg class="ic" viewBox="0 0 22 22"><g fill="#ffc966"><path id="sn" d="M8.5 0H13.5A2.5 2.5 0 0 1 16 2.5V8A2.5 2.5 0 0 1 13.5 10.5H7.5A2.5 2.5 0 0 0 5 13V16.5H3A3 3 0 0 1 0 13.5V9A3 3 0 0 1 3 6H10.5V5.2H6V2.5A2.5 2.5 0 0 1 8.5 0Z"/><path d="M8.5 0H13.5A2.5 2.5 0 0 1 16 2.5V8A2.5 2.5 0 0 1 13.5 10.5H7.5A2.5 2.5 0 0 0 5 13V16.5H3A3 3 0 0 1 0 13.5V9A3 3 0 0 1 3 6H10.5V5.2H6V2.5A2.5 2.5 0 0 1 8.5 0Z" transform="rotate(180 11 11)"/></g><rect x="7" y="2" width="2" height="2" fill="#263238"/><rect x="13" y="18" width="2" height="2" fill="#263238"/></svg><span class="f" style="letter-spacing:-0.6px">TestCaseDao.py</span><span class="n">13</span><span class="c" style="letter-spacing:0.144px"><span class="k">from</span> app<span class="o">.</span>models<span class="o">.</span>constructor <span class="k">import</span> <span class="b">Constructor</span></span></div>
<div class="row" style="top:990px"><svg class="ic" viewBox="0 0 22 22"><g fill="#ffc966"><path id="sn" d="M8.5 0H13.5A2.5 2.5 0 0 1 16 2.5V8A2.5 2.5 0 0 1 13.5 10.5H7.5A2.5 2.5 0 0 0 5 13V16.5H3A3 3 0 0 1 0 13.5V9A3 3 0 0 1 3 6H10.5V5.2H6V2.5A2.5 2.5 0 0 1 8.5 0Z"/><path d="M8.5 0H13.5A2.5 2.5 0 0 1 16 2.5V8A2.5 2.5 0 0 1 13.5 10.5H7.5A2.5 2.5 0 0 0 5 13V16.5H3A3 3 0 0 1 0 13.5V9A3 3 0 0 1 3 6H10.5V5.2H6V2.5A2.5 2.5 0 0 1 8.5 0Z" transform="rotate(180 11 11)"/></g><rect x="7" y="2" width="2" height="2" fill="#263238"/><rect x="13" y="18" width="2" height="2" fill="#263238"/></svg><span class="f" style="letter-spacing:-0.6px">TestCaseDao.py</span><span class="n">155</span><span class="c" style="letter-spacing:-0.302px"><span class="k">async</span> <span class="k">def</span> query_test_case_by_constructors<span class="o">(</span>constructors<span class="o">:</span> List<span class="o">[</span><span class="b">Constructor</span><span class="o">]):</span></span></div>
</div>
<div class="abs" style="left:1664px;top:259px;width:15px;height:591px;background:#175e5b"></div>
<div class="abs t19" style="left:16px;top:1102px;line-height:20px;font-size:17px;color:#0f9488">Press Ctrl+Alt+F7 again to search in 'Project Files'</div>

</div></div><!--/pop-->






















</body></html>
